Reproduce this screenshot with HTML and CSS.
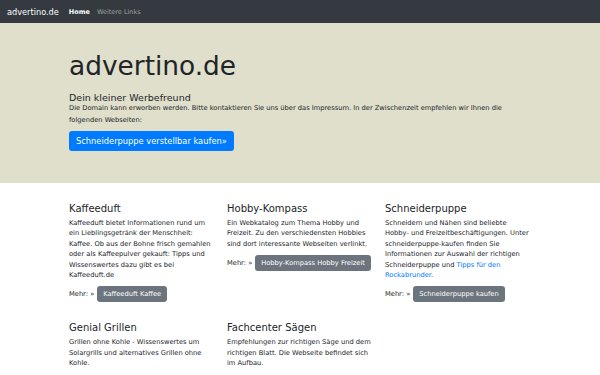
FILE: index.html
```html
<!DOCTYPE html>
<html lang="de">
<head>
    <meta charset="UTF-8">
    <meta name="viewport" content="width=device-width, initial-scale=1.0">
    <title>advertino.de</title>
    <link rel="stylesheet" href="styles.css">
</head>
<body>

    <!-- Navigation -->
    <nav class="navbar">
        <a class="brand" href="#">advertino.de</a>
        <a class="nav-link active" href="#">Home</a>
        <a class="nav-link" href="#">Weitere Links</a>
    </nav>

    <!-- Jumbotron -->
    <div class="jumbotron">
        <div class="container">
            <h1>advertino.de</h1>
            <h2>Dein kleiner Werbefreund</h2>
            <p>Die Domain kann erworben werden. Bitte kontaktieren Sie uns über das Impressum. In der Zwischenzeit empfehlen wir Ihnen die folgenden Webseiten:</p>
            <a class="btn btn-primary" href="#">Schneiderpuppe verstellbar kaufen»</a>
        </div>
    </div>

    <!-- Empfehlungen -->
    <div class="container">
        <div class="row">
            <div class="col">
                <h3>Kaffeeduft</h3>
                <p>Kaffeeduft bietet Informationen rund um ein Lieblingsgetränk der Menschheit: Kaffee. Ob aus der Bohne frisch gemahlen oder als Kaffeepulver gekauft: Tipps und Wissenswertes dazu gibt es bei Kaffeeduft.de</p>
                <p class="more">Mehr: » <a class="btn btn-secondary" href="#">Kaffeeduft Kaffee</a></p>
            </div>
            <div class="col">
                <h3>Hobby-Kompass</h3>
                <p>Ein Webkatalog zum Thema Hobby und Freizeit. Zu den verschiedensten Hobbies sind dort interessante Webseiten verlinkt.</p>
                <p class="more">Mehr: » <a class="btn btn-secondary" href="#">Hobby-Kompass Hobby Freizeit</a></p>
            </div>
            <div class="col">
                <h3>Schneiderpuppe</h3>
                <p>Schneidern und Nähen sind beliebte Hobby- und Freizeitbeschäftigungen. Unter schneiderpuppe-kaufen finden Sie Informationen zur Auswahl der richtigen Schneiderpuppe und <a href="#">Tipps für den Rockabrunder</a>.</p>
                <p class="more">Mehr: » <a class="btn btn-secondary" href="#">Schneiderpuppe kaufen</a></p>
            </div>
            <div class="col">
                <h3>Genial Grillen</h3>
                <p>Grillen ohne Kohle - Wissenswertes um Solargrills und alternatives Grillen ohne Kohle.</p>
                <p class="more">Mehr: » <a class="btn btn-secondary" href="#">Solargrill ohne Kohle</a></p>
            </div>
            <div class="col">
                <h3>Fachcenter Sägen</h3>
                <p>Empfehlungen zur richtigen Säge und dem richtigen Blatt. Die Webseite befindet sich im Aufbau.</p>
                <p class="more">Mehr: » <a class="btn btn-secondary" href="#">Fachcenter Sägen</a></p>
            </div>
        </div>
    </div>

</body>
</html>
```

FILE: styles.css
```css
body {
    font-family: "DejaVu Sans", sans-serif;
    color: #212529;
    background: white;
    margin: 0;
    padding: 0;
}

a {
    color: #007bff;
    text-decoration: none;
}

.navbar {
    display: flex;
    align-items: center;
    height: 23px;
    padding: 0 7px;
    background-color: #343a40;
}

.brand {
    color: white;
    font-size: 8.2px;
    margin-right: 10px;
}

.nav-link {
    color: rgba(255, 255, 255, 0.5);
    font-size: 6.5px;
    margin-right: 7px;
}

.nav-link.active {
    color: white;
    font-weight: bold;
}

.container {
    width: 474px;
    padding-left: 69px;
}

.jumbotron {
    background-color: #dfdfcb;
    padding: 26px 0 32px;
}

.jumbotron .container {
    display: flex;
    flex-direction: column;
    align-items: flex-start;
}

.jumbotron h1 {
    font-size: 26.4px;
    font-weight: normal;
    line-height: 34px;
    margin: 0 0 10px;
}

.jumbotron h2 {
    font-size: 9.5px;
    font-weight: normal;
    line-height: 10px;
    margin: 0;
}

.jumbotron p {
    max-width: 440px;
    font-size: 6.7px;
    line-height: 11.5px;
    margin: 0 0 5px;
}

.btn {
    display: inline-block;
    color: white;
    border-radius: 3px;
}

.btn-primary {
    background-color: #007bff;
    font-size: 8.3px;
    padding: 4px 7px;
    line-height: 12px;
}

.btn-secondary {
    background-color: #6c757d;
    font-size: 6.7px;
    padding: 3px 6px;
    line-height: 10px;
}

.row {
    display: grid;
    grid-template-columns: repeat(3, 158px);
    padding-top: 20px;
}

.col {
    padding-right: 14px;
    margin-bottom: 20px;
}

.col h3 {
    font-size: 10px;
    font-weight: normal;
    line-height: 12px;
    margin: 0 0 3px;
}

.col p {
    font-size: 6.7px;
    line-height: 10.4px;
    margin: 0 0 6px;
}

.col p.more {
    display: flex;
    align-items: center;
    gap: 3px;
    margin: 0;
}
```
